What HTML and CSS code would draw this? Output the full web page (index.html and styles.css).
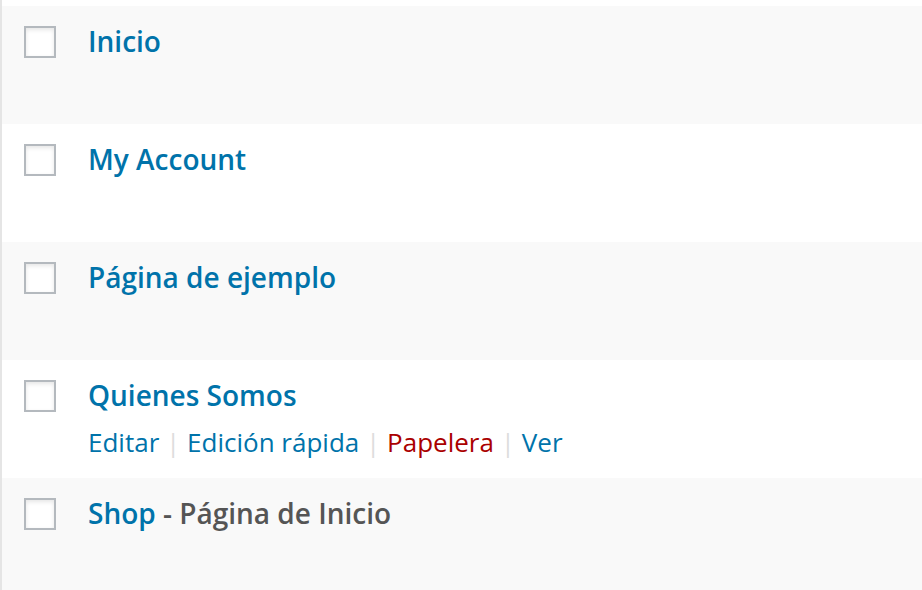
FILE: index.html
```html
<!DOCTYPE html>
<html lang="es">
<head>
<meta charset="utf-8">
<title>Páginas</title>
<link rel="stylesheet" href="styles.css">
</head>
<body>
<div class="list">
  <div class="row alt">
    <span class="check"></span>
    <div class="cell"><a class="title" href="#">Inicio</a></div>
  </div>
  <div class="row">
    <span class="check"></span>
    <div class="cell"><a class="title" href="#">My Account</a></div>
  </div>
  <div class="row alt">
    <span class="check"></span>
    <div class="cell"><a class="title" href="#">Página de ejemplo</a></div>
  </div>
  <div class="row">
    <span class="check"></span>
    <div class="cell">
      <a class="title" href="#">Quienes Somos</a>
      <div class="actions"><a href="#">Editar</a> <span class="sep">|</span> <a href="#">Edición rápida</a> <span class="sep">|</span> <a class="trash" href="#">Papelera</a> <span class="sep">|</span> <a href="#">Ver</a></div>
    </div>
  </div>
  <div class="row alt">
    <span class="check"></span>
    <div class="cell"><a class="title" href="#">Shop</a><span class="state"> - Página de Inicio</span></div>
  </div>
</div>
</body>
</html>
```
FILE: styles.css
```css
html, body {
  margin: 0;
  padding: 0;
  background: #fff;
}
body {
  font-family: "Open Sans", "Noto Sans", sans-serif;
  color: #555;
}
.list {
  border-left: 2px solid #e5e5e5;
  min-height: 590px;
  padding-top: 6px;
  box-sizing: border-box;
}
.row {
  display: flex;
  align-items: flex-start;
  height: 118px;
  box-sizing: border-box;
  padding: 15px 0 0 22px;
  background: #fff;
}
.row.alt {
  background: #f9f9f9;
}
.check {
  flex: none;
  width: 32px;
  height: 32px;
  margin-top: 5px;
  box-sizing: border-box;
  border: 2px solid #b4b9be;
  background: #fff;
  box-shadow: inset 0 2px 4px rgba(0, 0, 0, 0.1);
}
.cell {
  margin-left: 32px;
}
.title {
  font-size: 28px;
  line-height: 40px;
  font-weight: 600;
  color: #0073aa;
  text-decoration: none;
}
.state {
  font-size: 28px;
  line-height: 40px;
  font-weight: 600;
  color: #555;
}
.actions {
  margin-top: 9px;
  font-size: 26px;
  line-height: 36px;
  color: #ddd;
}
.actions a {
  color: #0073aa;
  text-decoration: none;
}
.actions a.trash {
  color: #a00;
}
.sep {
  color: #ddd;
}
```
